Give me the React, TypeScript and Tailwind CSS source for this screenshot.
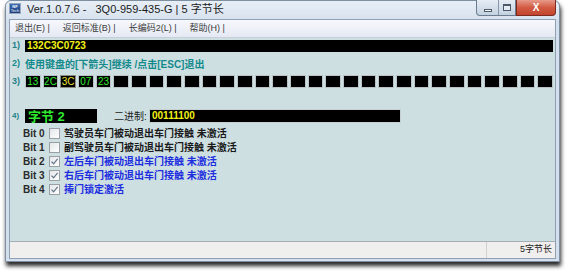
import React from 'react';

const font = { fontFamily: '"Liberation Sans", "Noto Sans CJK SC", sans-serif' };

type Bit = { label: string; text: string; checked: boolean };

const bits: Bit[] = [
  { label: 'Bit 0', text: '驾驶员车门被动退出车门接触 未激活', checked: false },
  { label: 'Bit 1', text: '副驾驶员车门被动退出车门接触 未激活', checked: false },
  { label: 'Bit 2', text: '左后车门被动退出车门接触 未激活', checked: true },
  { label: 'Bit 3', text: '右后车门被动退出车门接触 未激活', checked: true },
  { label: 'Bit 4', text: '捧门锁定激活', checked: true },
];

const bytes = ['13', '2C', '3C', '07', '23'];

function CheckBox({ checked }: { checked: boolean }) {
  return (
    <div className="w-[11px] h-[11px] border border-[#9a9fa6] bg-gradient-to-br from-[#e4e6e9] to-[#ffffff] flex items-center justify-center">
      {checked && (
        <svg width="9" height="9" viewBox="0 0 9 9">
          <path d="M1.5 4.6 L3.6 6.8 L7.6 1.8" fill="none" stroke="#6b7a8c" strokeWidth="1.3" />
        </svg>
      )}
    </div>
  );
}

export default function App() {
  return (
    <div className="w-[566px] h-[274px] bg-white pl-[5px] overflow-hidden" style={font}>
      <div className="w-[555px] h-[262px] flex flex-col bg-[#d3dfec] border border-[#7f8fa2] rounded-t-[6px] shadow-[1px_4px_4px_rgba(0,0,0,0.85)]">
        {/* Title bar */}
        <div className="h-[18px] flex items-start bg-gradient-to-b from-[#e8eef6] to-[#d8e3ef] rounded-t-[6px]">
          <div className="ml-[3px] mt-[2px] w-[12px] h-[11px] bg-gradient-to-b from-[#3c6bb4] to-[#1c3f7c] border border-[#9ab] flex flex-col items-center justify-center leading-none text-white">
            <span className="text-[4px] font-bold leading-[4px]">NF</span>
            <span className="text-[4px] leading-[4px]">Tech</span>
          </div>
          <div className="ml-[6px] mt-[2px] text-[11px] leading-[13px] text-[#1b1b1b] whitespace-pre">
            Ver.1.0.7.6 -   3Q0-959-435-G | 5 字节长
          </div>
          <div className="flex-1" />
          <div className="flex mr-[3px] -mt-px">
            <div className="flex h-[16px] border border-[#6b7c90] border-t-0 rounded-bl-[4px] bg-gradient-to-b from-[#e6edf5] to-[#c3d1e0] overflow-hidden">
              <div className="w-[22px] flex items-end justify-center pb-[3px] border-r border-[#8796a8]">
                <div className="w-[8px] h-[3px] bg-white border border-[#4a5868]" />
              </div>
              <div className="w-[16px] flex items-center justify-center">
                <div className="w-[8px] h-[7px] border border-[#4a5868] border-t-2 bg-white/40" />
              </div>
            </div>
            <div className="w-[40px] h-[16px] border border-[#7a2a20] border-t-0 rounded-br-[4px] bg-gradient-to-b from-[#e69a8a] via-[#d25a43] to-[#c2442c] flex items-center justify-center text-white font-bold text-[10px] leading-none">
              X
            </div>
          </div>
        </div>

        {/* Client */}
        <div className="flex-1 mx-[3px] border border-[#8fa0b3] flex flex-col">
          {/* Menu bar */}
          <div className="h-[18px] flex items-center bg-gradient-to-b from-[#f7f8fc] to-[#e5e9f3] border-b border-[#c8ced9] text-[9px] text-[#3a3a3a] whitespace-pre">
            <span className="ml-[5px]">退出(E) |</span>
            <span className="ml-[13px]">返回标准(B) |</span>
            <span className="ml-[13px]">长编码2(L) |</span>
            <span className="ml-[13px]">帮助(H) |</span>
          </div>

          {/* Content */}
          <div className="flex-1 bg-[#cedfe2] flex flex-col pt-[2px]">
            <div className="flex items-center h-[12px] pl-[2px] pr-[2px]">
              <span className="w-[13px] text-[9px] font-bold text-[#1f7f86]">1)</span>
              <div className="flex-1 h-[12px] bg-black flex items-center pl-[2px] text-[10px] font-bold text-[#f2f215] leading-none">
                132C3C0723
              </div>
            </div>

            <div className="flex items-center h-[12px] mt-[6px] pl-[2px] text-[10px] font-bold text-[#138a8c] whitespace-pre">
              <span className="w-[13px] text-[9px]">2)</span>
              <span>使用键盘的[下箭头]继续 /点击[ESC]退出</span>
            </div>

            <div className="flex items-center h-[13px] mt-[5px] pl-[2px] pr-[2px]">
              <span className="w-[13px] text-[9px] font-bold text-[#1f7f86]">3)</span>
              <div className="flex-1 flex gap-[2px] h-[13px]">
                {Array.from({ length: 30 }).map((_, i) => {
                  const v = bytes[i];
                  const sel = i === 2;
                  return (
                    <div
                      key={i}
                      className={`flex-1 bg-black flex items-center justify-center text-[10px] leading-none ${
                        sel ? 'border-[1.5px] border-[#8c8c82] text-[#e8e030]' : 'border border-[#b9c3c6] text-[#2ee82e]'
                      }`}
                    >
                      {v}
                    </div>
                  );
                })}
              </div>
            </div>

            <div className="flex items-center h-[14px] mt-[21px] pl-[2px]">
              <span className="w-[13px] text-[8px] font-bold text-[#1f7f86]">4)</span>
              <div className="w-[72px] h-[14px] bg-black flex items-center pl-[3px] text-[13px] font-bold text-[#2ee82e] leading-none">
                字节 2
              </div>
              <span className="ml-[17px] w-[35px] text-[10px] text-[#1a1a1a]">二进制:</span>
              <div className="w-[252px] h-[14px] bg-black border border-[#c8cfd2] flex items-center pl-[2px] text-[10px] font-bold text-[#f2f215] leading-none">
                00111100
              </div>
            </div>

            <div className="flex flex-col mt-[3px] pl-[13px]">
              {bits.map((b) => (
                <div key={b.label} className="flex items-center h-[14px]">
                  <span className="w-[26px] text-[10px] font-bold text-[#2a2a2a]">{b.label}</span>
                  <CheckBox checked={b.checked} />
                  <span
                    className={`ml-[4px] text-[10px] font-bold ${b.checked ? 'text-[#1c2ee0]' : 'text-[#1a1a1a]'}`}
                  >
                    {b.text}
                  </span>
                </div>
              ))}
            </div>
          </div>

          {/* Status bar */}
          <div className="h-[17px] flex bg-[#f1eeee] border-t border-[#a4acb4]">
            <div className="flex-1" />
            <div className="w-[69px] border-l border-[#d2d0d0] flex items-center justify-end pr-[3px] text-[9px] text-[#222]">
              5字节长
            </div>
          </div>
        </div>
        <div className="h-[2px]" />
      </div>
    </div>
  );
}
